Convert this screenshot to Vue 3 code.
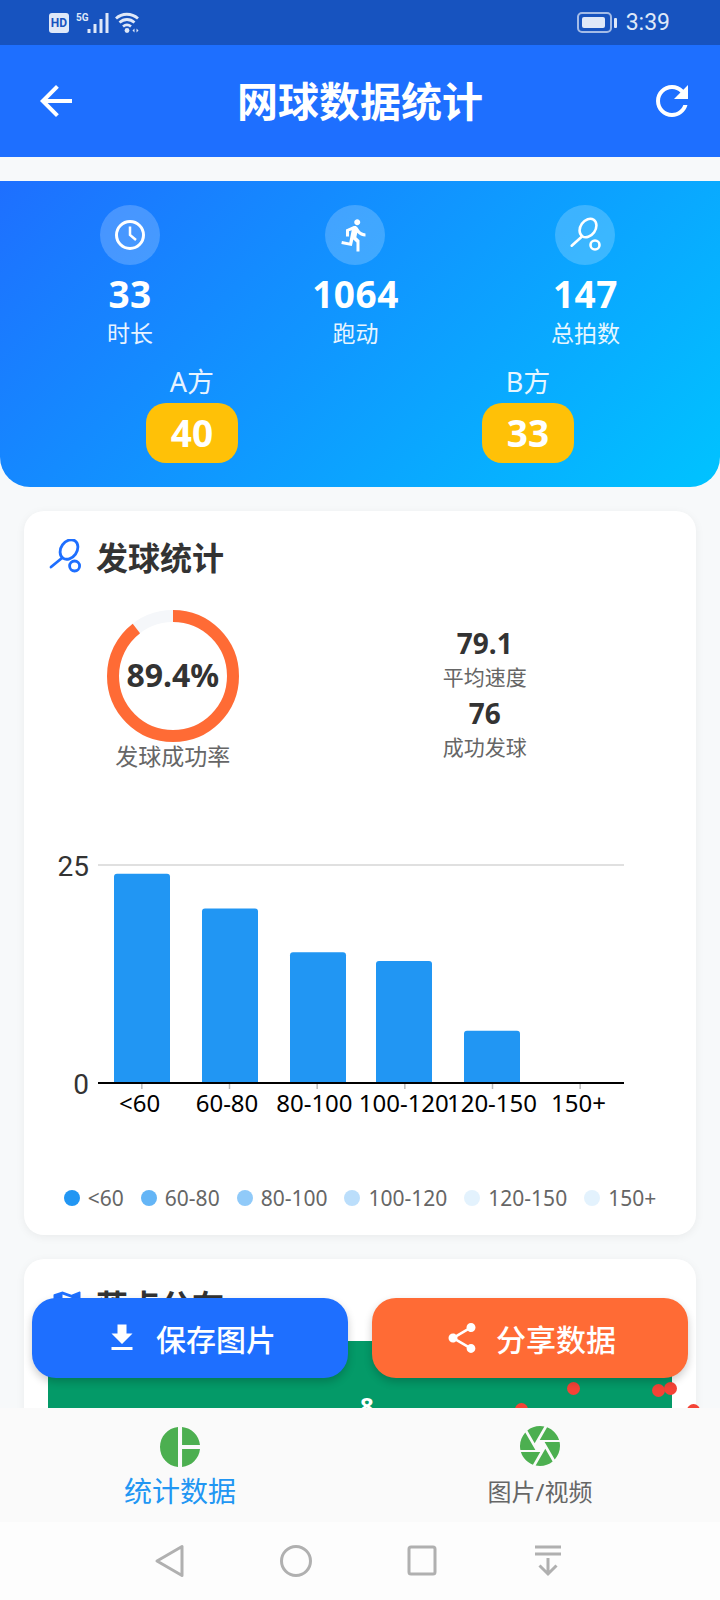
<template>
  <div class="phone">
    <div class="status-bar">
      <div class="status-left">
        <span class="hd">HD</span>
        <span class="five-g">5G</span>
        <svg class="signal" width="22" height="22" viewBox="0 0 22 22">
          <rect x="0.500" y="16" width="3" height="4" fill="#dfe8f8" />
          <rect x="6.500" y="11" width="3" height="9" fill="#dfe8f8" />
          <rect x="12.500" y="6" width="3" height="14" fill="#dfe8f8" />
          <rect x="18.500" y="0" width="3" height="20" fill="#dfe8f8" />
        </svg>
        <svg class="wifi" width="26" height="22" viewBox="0 0 26 22" fill="none" stroke="#dfe8f8" stroke-width="2.800">
          <path d="M1 6.500C7 .8 16.500.8 23 6.500" />
          <path d="M4.500 10.500c4.500-4 10.500-4 15 0" />
          <path d="M8 14.500c2.500-2 5.500-2 8 0" />
          <circle cx="12" cy="18.500" r="2.400" fill="#dfe8f8" stroke="none" />
          <path d="M19.500 16.500v4l-2-2zM21.500 16.500v4l2-2z" fill="#dfe8f8" stroke="none" />
        </svg>
      </div>
      <div class="status-right">
        <div class="battery"><div class="battery-fill"></div></div>
        <div class="battery-nub"></div>
        <span class="clock">3:39</span>
      </div>
    </div>

    <header class="app-bar">
      <svg class="back" width="48" height="48" viewBox="0 0 24 24" fill="#fff">
        <path d="M20 11H7.830l5.590-5.590L12 4l-8 8 8 8 1.410-1.410L7.830 13H20v-2z" />
      </svg>
      <h1>网球数据统计</h1>
      <svg class="refresh" width="48" height="48" viewBox="0 0 24 24" fill="#fff">
        <path d="M17.650 6.350C16.200 4.900 14.210 4 12 4c-4.420 0-7.990 3.580-7.990 8s3.570 8 7.990 8c3.730 0 6.840-2.550 7.730-6h-2.080c-.82 2.330-3.040 4-5.650 4-3.310 0-6-2.690-6-6s2.690-6 6-6c1.660 0 3.140.69 4.220 1.780L13 11h7V4l-2.350 2.350z" />
      </svg>
    </header>

    <main class="content">
      <section class="hero">
        <div class="hero-stats">
          <div class="hero-stat">
            <div class="hero-icon">
              <svg width="36" height="36" viewBox="0 0 36 36" fill="none" stroke="#fff" stroke-width="3">
                <circle cx="18" cy="18" r="13.500" />
                <path d="M18 9.500V18l6 5" stroke-width="2.500" />
              </svg>
            </div>
            <div class="hero-value">33</div>
            <div class="hero-label">时长</div>
          </div>
          <div class="hero-stat">
            <div class="hero-icon">
              <svg width="36" height="36" viewBox="0 0 24 24" fill="#fff">
                <path d="M13.490 5.480c1.100 0 2-.9 2-2s-.9-2-2-2-2 .9-2 2 .9 2 2 2zm-3.600 13.900l1-4.400 2.100 2v6h2v-7.500l-2.100-2 .6-3c1.300 1.500 3.300 2.500 5.500 2.500v-2c-1.900 0-3.500-1-4.300-2.400l-1-1.600c-.4-.6-1-1-1.700-1-.3 0-.5.1-.8.1l-5.200 2.200v4.700h2v-3.400l1.800-.7-1.600 8.100-4.900-1-.4 2 7 1.400z" />
              </svg>
            </div>
            <div class="hero-value">1064</div>
            <div class="hero-label">跑动</div>
          </div>
          <div class="hero-stat">
            <div class="hero-icon">
              <svg width="36" height="36" viewBox="0 0 36 36" fill="none" stroke="#fff" stroke-width="2.600">
                <ellipse cx="21" cy="11" rx="7.500" ry="10" transform="rotate(35 21 11)" />
                <path d="M14.700 19.700L4.700 28.700" stroke-linecap="round" />
                <circle cx="28" cy="28" r="4.500" />
              </svg>
            </div>
            <div class="hero-value">147</div>
            <div class="hero-label">总拍数</div>
          </div>
        </div>
        <div class="hero-sides">
          <div v-for="side in sides" :key="side.name" class="side">
            <div class="side-name">{{ side.name }}</div>
            <div class="side-score">{{ side.score }}</div>
          </div>
        </div>
      </section>

      <section class="card">
        <div class="card-title">
          <svg width="36" height="36" viewBox="0 0 36 36" fill="none" stroke="#1e6fff" stroke-width="2.800">
            <ellipse cx="20" cy="10.500" rx="8" ry="10.500" transform="rotate(35 20 10.500)" />
            <path d="M13 19L2 28" stroke-linecap="round" />
            <circle cx="25.600" cy="27" r="5" />
          </svg>
          <h2>发球统计</h2>
        </div>
        <div class="serve-grid">
          <div class="ring-col">
            <div class="ring">
              <svg width="132" height="132" viewBox="0 0 132 132" fill="none" stroke-width="12">
                <circle cx="66" cy="66" r="60" stroke="#f5f7fa" />
                <circle cx="66" cy="66" r="60" stroke="#ff6b35" :stroke-dasharray="ringDash" transform="rotate(-90 66 66)" />
              </svg>
              <span class="ring-text">89.4%</span>
            </div>
            <div class="ring-label">发球成功率</div>
          </div>
          <div class="serve-nums">
            <div class="num">79.1</div>
            <div class="num-label">平均速度</div>
            <div class="num">76</div>
            <div class="num-label">成功发球</div>
          </div>
        </div>

        <svg class="chart" width="624" height="300" viewBox="0 0 624 300">
          <line x1="50" y1="20" x2="576" y2="20" stroke="#e0e0e0" stroke-width="2" />
          <text x="41" y="31" text-anchor="end" class="y-label">25</text>
          <text x="41" y="249" text-anchor="end" class="y-label">0</text>
          <path v-for="bar in bars" :key="bar.label" :d="bar.path" fill="#2196f3" />
          <line x1="50" y1="238" x2="576" y2="238" stroke="#000" stroke-width="2" />
          <line v-for="bar in bars" :key="bar.label + 't'" :x1="bar.center" y1="239" :x2="bar.center" y2="244" stroke="#bbb" stroke-width="1.500" />
          <text v-for="bar in bars" :key="bar.label + 'l'" :x="bar.labelX" y="267" text-anchor="middle" class="x-label">{{ bar.label }}</text>
        </svg>

        <div class="legend">
          <div v-for="bar in bars" :key="bar.label" class="legend-item">
            <span class="legend-dot" :style="{ background: bar.color }"></span>
            <span>{{ bar.label }}</span>
          </div>
        </div>
      </section>

      <section class="card">
        <div class="card-title">
          <svg width="36" height="36" viewBox="0 0 24 24" fill="#1e6fff">
            <path d="M20.500 3l-.16.03L15 5.100 9 3 3.360 4.900c-.21.07-.36.25-.36.48V20.500c0 .28.22.5.5.5l.16-.03L9 18.900l6 2.100 5.640-1.900c.21-.07.36-.25.36-.48V3.500c0-.28-.22-.5-.5-.5zM15 19l-6-2.110V5l6 2.110V19z" />
          </svg>
          <h2>落点分布</h2>
        </div>
        <div class="court">
          <span class="court-num">8</span>
          <span v-for="pin in pins" :key="pin.x" class="pin" :style="{ left: pin.x + 'px', top: pin.y + 'px' }"></span>
        </div>
      </section>
    </main>

    <div class="actions">
      <button class="action save">
        <svg width="36" height="36" viewBox="0 0 24 24" fill="#fff">
          <path d="M19 9h-4V3H9v6H5l7 7 7-7zM5 18v2h14v-2H5z" />
        </svg>
        保存图片
      </button>
      <button class="action share">
        <svg width="36" height="36" viewBox="0 0 24 24" fill="#fff">
          <path d="M18 16.080c-.76 0-1.440.3-1.960.77L8.910 12.700c.05-.23.09-.46.09-.7s-.04-.47-.09-.7l7.050-4.110c.54.5 1.250.81 2.040.81 1.660 0 3-1.340 3-3s-1.340-3-3-3-3 1.340-3 3c0 .24.04.47.09.7L8.040 9.810C7.500 9.310 6.790 9 6 9c-1.660 0-3 1.340-3 3s1.340 3 3 3c.79 0 1.500-.31 2.040-.81l7.120 4.160c-.05.21-.08.43-.08.65 0 1.610 1.310 2.920 2.920 2.920s2.920-1.310 2.920-2.920-1.310-2.920-2.920-2.920z" />
        </svg>
        分享数据
      </button>
    </div>

    <nav class="tabs">
      <div class="tab active">
        <svg width="48" height="48" viewBox="0 0 24 24" fill="#4caf50">
          <path d="M11 2v20c-5.070-.5-9-4.790-9-10s3.930-9.500 9-10zm2.030 0v8.990H22c-.47-4.740-4.240-8.520-8.970-8.990zm0 11.010V22c4.740-.47 8.500-4.250 8.970-8.990h-8.970z" />
        </svg>
        <span>统计数据</span>
      </div>
      <div class="tab">
        <svg width="48" height="48" viewBox="0 0 24 24" fill="#4caf50">
          <path d="M9.400 10.500l4.770-8.260C13.470 2.090 12.750 2 12 2c-2.400 0-4.600.85-6.320 2.250l3.660 6.350.06-.1zM21.540 9c-.92-2.920-3.150-5.260-6-6.340L11.880 9h9.660zm.26 1h-7.490l.29.5 4.760 8.250C21 16.970 22 14.610 22 12c0-.69-.07-1.350-.2-2zM8.540 12l-3.900-6.750C3.010 7.030 2 9.390 2 12c0 .69.07 1.350.2 2h7.490l-1.150-2zm-6.080 3c.92 2.920 3.150 5.260 6 6.340L12.120 15H2.460zm11.270 0l-3.900 6.760c.7.15 1.420.24 2.170.24 2.400 0 4.600-.85 6.320-2.250l-3.660-6.350-.93 1.600z" />
        </svg>
        <span>图片/视频</span>
      </div>
    </nav>

    <div class="nav-bar">
      <svg width="32" height="36" viewBox="0 0 32 36" fill="none" stroke="#b0b0b0" stroke-width="3" stroke-linejoin="round">
        <path d="M28 3.500v29L3 18z" />
      </svg>
      <svg width="32" height="36" viewBox="0 0 32 36" fill="none" stroke="#b0b0b0" stroke-width="3">
        <circle cx="16" cy="18" r="14.500" />
      </svg>
      <svg width="32" height="36" viewBox="0 0 32 36" fill="none" stroke="#b0b0b0" stroke-width="3">
        <rect x="3" y="4" width="26" height="27" rx="2" />
      </svg>
      <svg width="32" height="36" viewBox="0 0 32 36" fill="none" stroke="#b0b0b0" stroke-width="3">
        <path d="M3 4h26M3 11h26M16 15v16M7.500 22.500L16 31l8.500-8.500" />
      </svg>
    </div>
  </div>
</template>

<script setup>
const sides = [
  { name: "A方", score: 40 },
  { name: "B方", score: 33 },
];

// 2π·60 · 0.894
const ringLen = 2 * Math.PI * 60;
const ringDash = `${ringLen * 0.894} ${ringLen}`;

const axisLeft = 50;
const slot = 526 / 6;
const unit = 218 / 25;
const colors = ["#2196f3", "#64b5f6", "#90caf9", "#bbdefb", "#e3f2fd", "#e3f2fd"];
const labelXs = [91.7, 179, 266.4, 355.8, 444, 530.5];
const barLefts = [66, 154, 242, 328, 416, 504];

const bars = [
  { label: "<60", value: 24 },
  { label: "60-80", value: 20 },
  { label: "80-100", value: 15 },
  { label: "100-120", value: 14 },
  { label: "120-150", value: 6 },
  { label: "150+", value: 0 },
].map((b, i) => {
  const center = axisLeft + slot * (i + 0.5);
  const top = 238 - b.value * unit;
  const l = barLefts[i];
  const r = l + 56;
  const path = b.value
    ? `M${l} 238V${top + 3}Q${l} ${top} ${l + 3} ${top}H${r - 3}Q${r} ${top} ${r} ${top + 3}V238Z`
    : "";
  return { ...b, center, path, color: colors[i], labelX: labelXs[i] };
});

const pins = [
  { x: 519, y: 40.5 },
  { x: 603.5, y: 42.5 },
  { x: 615.5, y: 40.5 },
  { x: 466.5, y: 62 },
  { x: 638.5, y: 63 },
];
</script>

<style scoped>
.phone {
  position: relative;
  width: 720px;
  height: 1600px;
  display: flex;
  flex-direction: column;
  overflow: hidden;
  background: #f7f9fa;
  font-family: "Noto Sans", "Noto Sans CJK SC", sans-serif;
}

.status-bar {
  height: 45px;
  flex: none;
  display: flex;
  justify-content: space-between;
  align-items: center;
  padding: 0 50px 0 49px;
  background: #1753bf;
  color: #dfe8f8;
}
.status-left,
.status-right {
  display: flex;
  align-items: center;
}
.hd {
  width: 20px;
  height: 20px;
  border-radius: 3px;
  background: #dfe8f8;
  color: #1753bf;
  font: 700 12px/20px Roboto, sans-serif;
  text-align: center;
}
.five-g {
  width: 18px;
  margin-left: 7px;
  margin-bottom: 10px;
  font: 700 10px/10px Roboto, sans-serif;
}
.signal {
  margin-left: -7px;
  margin-top: 2px;
}
.wifi {
  margin-left: 6px;
  margin-top: 1px;
}
.battery {
  width: 35px;
  height: 21px;
  padding: 3px;
  box-sizing: border-box;
  border: 2px solid rgba(223, 232, 248, 0.7);
  border-radius: 5px;
}
.battery-fill {
  height: 100%;
  width: 92%;
  border-radius: 2px;
  background: #dfe8f8;
}
.battery-nub {
  width: 3px;
  height: 10px;
  margin-left: 2px;
  border-radius: 1px;
  background: #dfe8f8;
}
.clock {
  margin-left: 9px;
  font: 400 23px/30px Roboto, sans-serif;
}

.app-bar {
  height: 112px;
  flex: none;
  display: grid;
  grid-template-columns: 1fr auto 1fr;
  align-items: center;
  padding: 0 24px 0 32px;
  background: #1e6fff;
}
.app-bar h1 {
  margin: 0;
  color: #fff;
  font-size: 41px;
  font-weight: 700;
  line-height: 56px;
  transform: translateX(-4px);
}
.refresh {
  justify-self: end;
}

.content {
  flex: 1;
  min-height: 0;
  overflow: hidden;
  padding-top: 24px;
}

.hero {
  height: 306px;
  box-sizing: border-box;
  padding: 24px 24px 0;
  border-radius: 0 0 30px 30px;
  background: linear-gradient(135deg, #1e6fff, #00c3ff);
  color: #fff;
}
.hero-stats,
.hero-sides {
  display: flex;
  justify-content: space-around;
}
.hero-stat {
  display: flex;
  flex-direction: column;
  align-items: center;
}
.hero-icon {
  width: 60px;
  height: 60px;
  display: flex;
  align-items: center;
  justify-content: center;
  border-radius: 50%;
  background: rgba(255, 255, 255, 0.2);
}
.hero-value {
  margin-top: 7px;
  font-size: 37px;
  font-weight: 700;
  line-height: 44px;
  letter-spacing: 0.5px;
}
.hero-label {
  margin-top: 2px;
  font-size: 23px;
  line-height: 30px;
  opacity: 0.9;
}
.hero-sides {
  margin-top: 16px;
}
.side {
  display: flex;
  flex-direction: column;
  align-items: center;
}
.side-name {
  font-size: 27px;
  line-height: 36px;
  opacity: 0.9;
}
.side-score {
  width: 92px;
  height: 60px;
  margin-top: 3px;
  border-radius: 20px;
  background: #ffc107;
  font-size: 37px;
  font-weight: 700;
  line-height: 60px;
  text-align: center;
}

.card {
  margin: 24px 24px 0;
  padding: 24px 24px 22px;
  border-radius: 20px;
  background: #fff;
  box-shadow: 0 2px 10px rgba(0, 0, 0, 0.06);
}
.card-title {
  height: 44px;
  display: flex;
  align-items: center;
  gap: 11px;
}
.card-title svg {
  margin-left: 1px;
}
.card-title h2 {
  margin: 2px 0 0;
  color: #333;
  font-size: 32px;
  font-weight: 700;
  line-height: 44px;
}

.serve-grid {
  display: grid;
  grid-template-columns: 2fr 3fr;
  margin-top: 31px;
}
.ring-col {
  display: flex;
  flex-direction: column;
  align-items: center;
}
.ring {
  position: relative;
  width: 132px;
  height: 132px;
}
.ring svg {
  display: block;
}
.ring-text {
  position: absolute;
  inset: -4px 0 0;
  display: flex;
  align-items: center;
  justify-content: center;
  color: #333;
  font-size: 32px;
  font-weight: 700;
}
.ring-label {
  margin-top: -3px;
  color: #666;
  font-size: 23px;
  line-height: 34px;
}
.serve-nums {
  display: flex;
  flex-direction: column;
  align-items: center;
  padding-top: 14px;
}
.num {
  color: #333;
  font-size: 28px;
  font-weight: 700;
  line-height: 38px;
}
.num-label {
  margin-bottom: 2px;
  color: #666;
  font-size: 21px;
  line-height: 30px;
}

.chart {
  display: block;
  margin-top: 72px;
}
.y-label {
  fill: #333;
  font: 400 28px Roboto, sans-serif;
}
.x-label {
  fill: #000;
  font: 400 24px "Noto Sans", sans-serif;
}

.legend {
  display: flex;
  justify-content: center;
  gap: 17px;
  margin-top: 38px;
  color: #666;
  font-size: 21px;
  line-height: 30px;
}
.legend-item {
  display: flex;
  align-items: center;
  gap: 8px;
}
.legend-dot {
  width: 16px;
  height: 16px;
  border-radius: 50%;
}

.court {
  position: relative;
  height: 420px;
  margin-top: 14px;
  background: #049a68;
}
.court-num {
  position: absolute;
  left: 312px;
  top: 48px;
  color: #fff;
  font-size: 24px;
  font-weight: 700;
  line-height: 34px;
}
.pin {
  position: absolute;
  width: 13px;
  height: 13px;
  border-radius: 50%;
  background: #f44336;
}

.actions {
  position: absolute;
  left: 32px;
  right: 32px;
  top: 1298px;
  display: flex;
  gap: 24px;
}
.action {
  flex: 1;
  height: 80px;
  display: flex;
  align-items: center;
  justify-content: center;
  gap: 16px;
  padding: 0;
  border: 0;
  border-radius: 24px;
  color: #fff;
  font-family: inherit;
  font-size: 30px;
  font-weight: 500;
  box-shadow: 0 4px 8px rgba(0, 0, 0, 0.2);
}
.save {
  background: #1e6fff;
}
.share {
  background: #ff6b35;
}

.tabs {
  height: 114px;
  flex: none;
  position: relative;
  display: grid;
  grid-template-columns: 1fr 1fr;
  background: #fafafa;
}
.tab {
  display: flex;
  flex-direction: column;
  align-items: center;
  padding-top: 14px;
  color: #666;
  font-size: 24px;
  line-height: 40px;
}
.tab span {
  margin-top: 2px;
}
.tab.active {
  padding-top: 15px;
  color: #2196f3;
  font-size: 28px;
}
.tab.active span {
  margin-top: 0;
}

.nav-bar {
  height: 78px;
  flex: none;
  position: relative;
  display: flex;
  justify-content: center;
  align-items: flex-start;
  gap: 94px;
  padding: 21px 2px 0 0;
  box-sizing: border-box;
  background: #fdfdfd;
}
</style>

<style>
html,
body {
  margin: 0;
  background: #f7f9fa;
}
</style>
